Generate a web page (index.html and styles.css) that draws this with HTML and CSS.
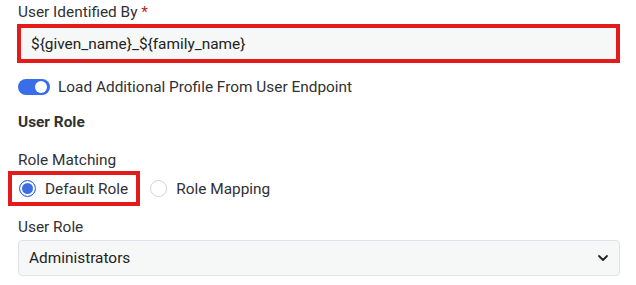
FILE: index.html
```html
<!DOCTYPE html>
<html>
<head>
    <title>User Settings</title>
    <meta charset="UTF-8">
    <link rel="stylesheet" href="styles.css">
</head>
<body>
    <div class="form">
        <label class="field-label">User Identified By <span class="required">*</span></label>
        <div class="text-input highlight">${given_name}_${family_name}</div>

        <div class="switch-row">
            <span class="switch"><span class="knob"></span></span>
            <span>Load Additional Profile From User Endpoint</span>
        </div>

        <div class="section-title">User Role</div>

        <label class="field-label matching">Role Matching</label>
        <div class="radio-group">
            <div class="radio-option highlight">
                <span class="radio checked"></span>
                <span>Default Role</span>
            </div>
            <div class="radio-option">
                <span class="radio"></span>
                <span>Role Mapping</span>
            </div>
        </div>

        <label class="field-label role">User Role</label>
        <div class="select">
            <span>Administrators</span>
            <svg width="12" height="8" viewBox="0 0 12 8">
                <path d="M2 2 L6 6 L10 2" fill="none" stroke="#222" stroke-width="1.8" stroke-linecap="round" stroke-linejoin="round"/>
            </svg>
        </div>
    </div>
</body>
</html>
```

FILE: styles.css
```css
* {
    margin: 0;
    padding: 0;
    box-sizing: border-box;
}

body {
    font-family: Roboto, 'Liberation Sans', sans-serif;
    font-size: 15.4px;
    color: #303133;
    background: #fff;
}

.form {
    display: flex;
    flex-direction: column;
    align-items: flex-start;
    padding: 2px 16px 0 18px;
}

.field-label {
    display: block;
    line-height: 20px;
    color: #303133;
}

.required {
    color: #b3261e;
}

.text-input {
    width: 603px;
    height: 39px;
    margin: 2px 0 0 -1px;
    padding: 0 10px;
    display: flex;
    align-items: center;
    background: #f6f8f7;
    color: #222;
}

.highlight {
    border: 4px solid #e31b1b;
}

.switch-row {
    display: flex;
    align-items: center;
    gap: 8px;
    height: 20px;
    margin-top: 14px;
}

.switch {
    width: 32px;
    height: 16px;
    border-radius: 8px;
    background: #3a6ee8;
    display: flex;
    align-items: center;
    justify-content: flex-end;
    padding-right: 3px;
}

.knob {
    width: 12px;
    height: 12px;
    border-radius: 50%;
    background: #fff;
}

.section-title {
    font-weight: 700;
    line-height: 20px;
    margin-top: 15px;
}

.matching {
    margin-top: 18px;
}

.radio-group {
    display: flex;
    align-items: center;
    gap: 10px;
    margin: 1px 0 0 -10px;
}

.radio-option {
    display: flex;
    align-items: center;
    gap: 9px;
    height: 35px;
    padding: 0 8px 0 7px;
}

.radio-option + .radio-option {
    padding-left: 0;
}

.radio {
    width: 17px;
    height: 17px;
    border-radius: 50%;
    border: 1px solid #cfd3d8;
    background: #fff;
}

.radio.checked {
    border-color: #3b6fe0;
    background: #3b6fe0;
    box-shadow: inset 0 0 0 2px #fff;
}

.role {
    margin-top: 11px;
}

.select {
    width: 602px;
    height: 36px;
    margin-top: 3px;
    padding: 0 10px;
    display: flex;
    align-items: center;
    justify-content: space-between;
    background: #f6f8f7;
    border: 1px solid #dfe2e6;
    border-radius: 4px;
    color: #222;
}
```
